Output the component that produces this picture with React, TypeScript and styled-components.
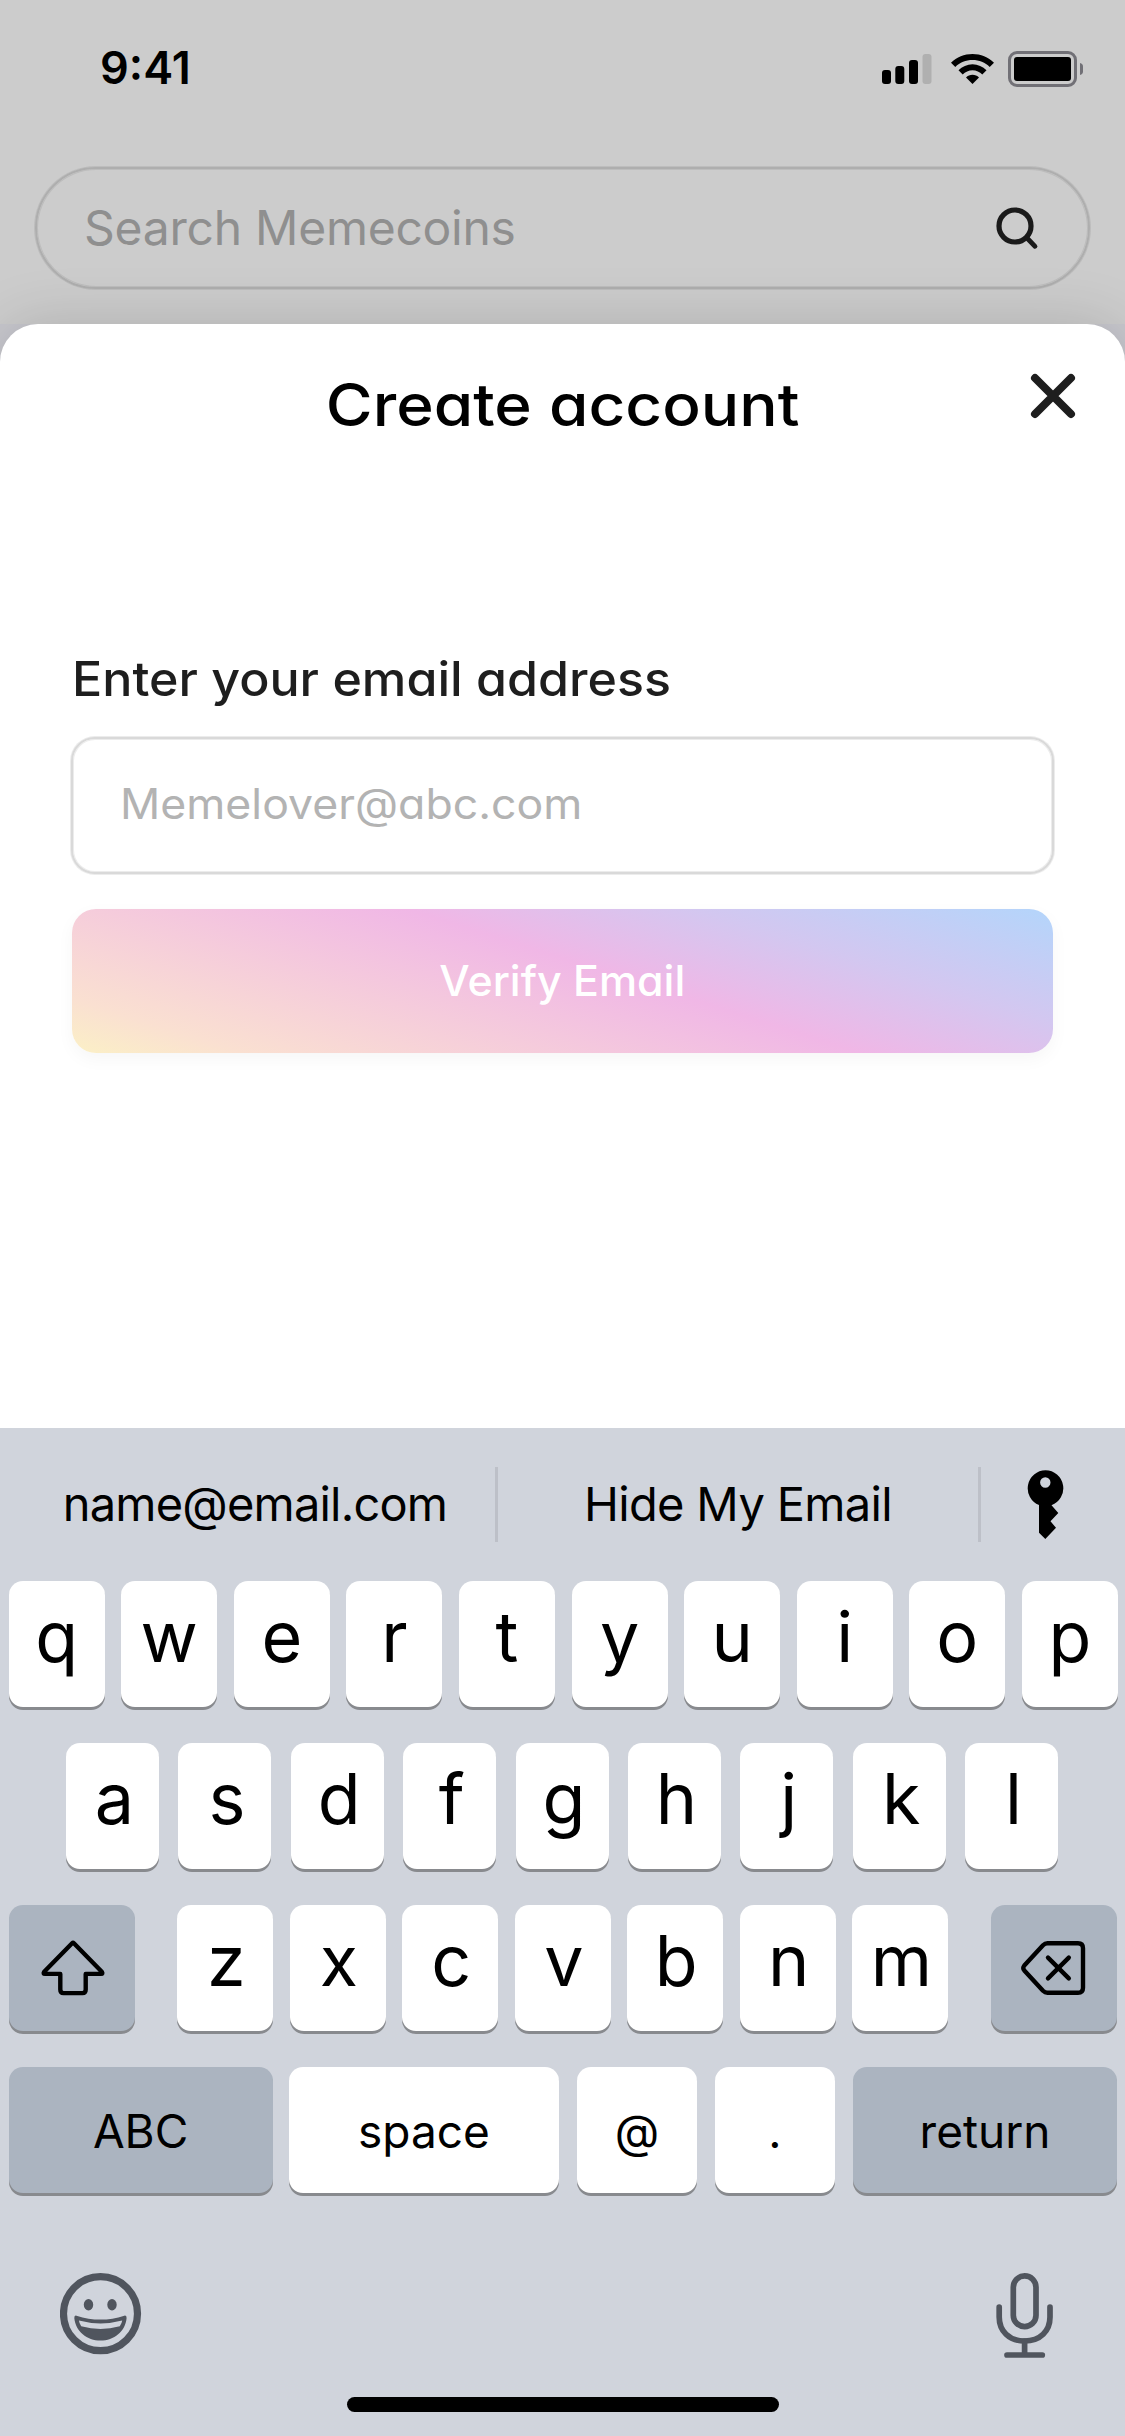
import React from "react";
import styled, { createGlobalStyle, css } from "styled-components";

const GlobalStyle = createGlobalStyle`
  *, *::before, *::after { box-sizing: border-box; }
  html, body { margin: 0; padding: 0; background: #d0d4dc; }
  body { font-family: Inter, "Liberation Sans", sans-serif; -webkit-font-smoothing: antialiased; }
  button { font-family: inherit; margin: 0; border: 0; }
  svg { display: block; }
`;

/* Wide lettering with a round, single-storey "a" */
const geometric = css<{ $stretch: number }>`
  display: inline-block;
  font-feature-settings: "cv11";
  transform: scaleX(${(p) => p.$stretch});
`;

const Screen = styled.main`
  display: flex;
  flex-direction: column;
  width: 1125px;
  height: 2436px;
  overflow: hidden;
  background: #d0d4dc;
`;

/* ---------- dimmed page behind the sheet ---------- */

const Backdrop = styled.header`
  flex: none;
  height: 324px;
  background: #cccccc;
`;

const StatusBar = styled.div`
  display: flex;
  align-items: center;
  justify-content: space-between;
  height: 134px;
  padding: 0 41px 0 100px;
`;

const Clock = styled.time`
  margin-top: 1px;
  font-size: 45px;
  line-height: 54px;
  font-weight: 600;
  color: #000;
`;

const StatusIcons = styled.svg`
  width: 202px;
  height: 36px;
  margin-top: 4px;
`;

const SearchField = styled.div`
  display: flex;
  align-items: center;
  justify-content: space-between;
  width: 1055px;
  height: 122px;
  margin: 33px 0 0 35px;
  padding: 0 49px 0 47px;
  border: 2px solid #aeaeae;
  border-radius: 61px;
  box-shadow: 0 0 0 1px rgba(174, 174, 174, 0.5), inset 0 0 0 1px rgba(174, 174, 174, 0.5);
`;

const SearchText = styled.span`
  font-size: 48px;
  line-height: 60px;
  letter-spacing: -0.25px;
  color: #8f8f8f;
`;

/* ---------- sheet ---------- */

const SheetArea = styled.section`
  flex: none;
  height: 1104px;
  background: #c7c7cd;
`;

const Sheet = styled.div`
  height: 100%;
  background: #fff;
  border-radius: 38px 38px 0 0;
  box-shadow: 0 0 60px rgba(0, 0, 0, 0.15);
`;

const SheetHeader = styled.div`
  display: grid;
  grid-template-columns: 1fr auto 1fr;
  align-items: center;
  height: 162px;
  padding: 0 44px;
`;

const SheetTitle = styled.h1<{ $stretch: number }>`
  ${geometric}
  grid-column: 2;
  margin: 0;
  font-size: 59px;
  line-height: 80px;
  font-weight: 500;
  color: #000;
`;

const CloseButton = styled.button`
  justify-self: end;
  padding: 0;
  margin: -18px 0 0;
  background: none;
`;

const Form = styled.form`
  display: flex;
  flex-direction: column;
  align-items: flex-start;
  margin: 163px 72px 0 71px;
`;

const Label = styled.label<{ $stretch: number }>`
  ${geometric}
  transform-origin: left;
  margin-left: 1px;
  font-size: 48px;
  line-height: 60px;
  font-weight: 500;
  color: #1e1e1e;
`;

const EmailField = styled.div`
  display: flex;
  align-items: center;
  width: 983px;
  height: 137px;
  margin-top: 28px;
  padding: 0 47px 3px;
  border: 2px solid #d9d9d9;
  border-radius: 24px;
  box-shadow: 0 0 0 1px rgba(217, 217, 217, 0.5), inset 0 0 0 1px rgba(217, 217, 217, 0.5);
  background: #fff;
`;

const Placeholder = styled.span<{ $stretch: number }>`
  ${geometric}
  transform-origin: left;
  font-size: 42px;
  line-height: 52px;
  color: #b3b3b3;
`;

const SubmitButton = styled.button`
  width: 981px;
  height: 144px;
  margin: 35px 0 0 1px;
  border-radius: 24px;
  background: linear-gradient(17.6deg, #fbf0c6 0%, #fae0d1 12%, #f0b7e6 55%, #d3c7f0 75%, #b6d4fa 98%);
  box-shadow: 0 6px 18px rgba(0, 0, 0, 0.04);
`;

const SubmitText = styled.span<{ $stretch: number }>`
  ${geometric}
  font-size: 42px;
  line-height: 52px;
  font-weight: 500;
  color: #fff;
`;

/* ---------- keyboard ---------- */

const Keyboard = styled.section`
  display: flex;
  flex-direction: column;
  flex: none;
  height: 1008px;
  background: #d0d4dc;
`;

const Suggestions = styled.div`
  display: grid;
  grid-template-columns: 480px 3px 480px 3px 129px;
  align-items: center;
  height: 153px;
  padding-left: 15px;
`;

const Suggestion = styled.button<{ $tracking?: number }>`
  height: 75px;
  padding: 0 0 2px;
  background: none;
  font-size: 47px;
  line-height: 60px;
  letter-spacing: ${(p) => p.$tracking ?? 0}px;
  color: #000;
  display: flex;
  align-items: center;
  justify-content: center;
`;

const IconSuggestion = styled(Suggestion)`
  padding: 0;
`;

const Divider = styled.i`
  height: 75px;
  background: #bdc0c8;
`;

const KeyRows = styled.div`
  display: flex;
  flex-direction: column;
  gap: 36px;
`;

const KeyRow = styled.div<{ $start: number; $end: number; $shift?: number }>`
  display: flex;
  justify-content: space-between;
  height: 126px;
  padding: 0 ${(p) => p.$end}px 0 ${(p) => p.$start}px;
  --nudge: ${(p) => p.$shift ?? 0}px;
`;

const BottomRow = styled(KeyRow)`
  justify-content: flex-start;
  gap: 18px;
`;

const KeyGroup = styled.div`
  display: flex;
  gap: 16.5px;
`;

const Key = styled.button<{ $w: number; $dark?: boolean; $label?: boolean }>`
  display: flex;
  align-items: center;
  justify-content: center;
  flex: none;
  width: ${(p) => p.$w}px;
  height: 126px;
  border-radius: 14px;
  background: ${(p) => (p.$dark ? "#abb4c0" : "#fff")};
  box-shadow: 0 3px 0 #888a8e;
  color: #000;
  ${(p) =>
    p.$label
      ? css`
          padding: 2px 0 0;
          font-size: 46px;
          line-height: 56px;
        `
      : css`
          padding: 0 0 15px var(--nudge);
          font-size: 70px;
          line-height: 84px;
        `}
`;

const ModeKey = styled(Key)`
  margin-right: -1.6px;
`;

const ShiftKey = styled(Key)`
  padding: 0 0 0 2px;
`;

const DeleteKey = styled(Key)`
  padding: 0 2px 0 0;
`;

const Dock = styled.div`
  display: flex;
  align-items: flex-start;
  justify-content: space-between;
  height: 204px;
  padding: 80px 72px 0 60px;
`;

const HomeIndicator = styled.div`
  width: 432px;
  height: 15px;
  margin: 0 auto;
  border-radius: 8px;
  background: #000;
`;

function StatusGlyphs() {
  return (
    <StatusIcons viewBox="0 0 202 36">
      <rect x="0" y="19" width="9" height="14" rx="3" />
      <rect x="13.3" y="15" width="9" height="18" rx="3" />
      <rect x="27" y="9" width="9" height="24" rx="3" />
      <rect x="40.5" y="3" width="9" height="30" rx="3" fill="#b0b0b0" />
      <path d="M90.5 3C82.3 3 74.7 6.3 69 11.7L73.3 15.9C77.8 11.6 83.8 9.1 90.5 9.1S103.2 11.6 107.7 15.9L112 11.7C106.3 6.3 98.7 3 90.5 3Z" />
      <path d="M90.5 13.2C85.1 13.2 80.2 15.5 76.5 19.3L80.7 23.5C83.3 20.9 86.7 19.3 90.5 19.3S97.7 20.9 100.3 23.5L104.5 19.3C100.8 15.5 95.9 13.2 90.5 13.2Z" />
      <path d="M90.5 23.8C88 23.8 85.7 24.8 84 26.5L90.5 33L97 26.5C95.3 24.8 93 23.8 90.5 23.8Z" />
      <rect x="127.5" y="1.5" width="66" height="33" rx="7.5" fill="none" stroke="#717076" strokeWidth="3" />
      <rect x="132" y="6" width="57" height="24" rx="3" />
      <path d="M198 12C200 12.3 201 13.8 201 15.5V20.5C201 22.2 200 23.7 198 24Z" fill="#717076" />
    </StatusIcons>
  );
}

function SearchIcon() {
  return (
    <svg width="44" height="44" viewBox="0 0 44 44" fill="none" stroke="#1a1a1a" strokeWidth="5.2" strokeLinecap="round">
      <circle cx="20" cy="20" r="16" />
      <path d="M32 32L40 40.3" strokeWidth="4.8" />
    </svg>
  );
}

function CloseIcon() {
  return (
    <svg width="56" height="56" viewBox="0 0 56 56" stroke="#1e1e1e" strokeWidth="8" strokeLinecap="round">
      <path d="M10 10L46 46M46 10L10 46" />
    </svg>
  );
}

function KeyIcon() {
  return (
    <svg width="37" height="70" viewBox="0 0 37 70">
      <path
        fillRule="evenodd"
        d="M18.5 0.3A18 18 0 0 1 24.5 35.2L31.3 43L23.5 51.3L29 57.8L18.3 69L12 62.8V35A18 18 0 0 1 18.5 0.3ZM18.3 7.3A5.2 5.2 0 1 0 18.3 17.7A5.2 5.2 0 1 0 18.3 7.3Z"
      />
    </svg>
  );
}

function ShiftIcon() {
  return (
    <svg width="66" height="58" viewBox="0 0 66 58" fill="none" stroke="#000" strokeWidth="4.4" strokeLinejoin="round">
      <path d="M33.9 4.3Q33 3.4 32.1 4.3L4.2 32.8Q2.8 34.9 5 34.9H20.3V50.5Q20.3 54.1 23.5 54.1H42.5Q45.7 54.1 45.7 50.5V34.9H61Q63.2 34.9 61.8 32.8Z" />
    </svg>
  );
}

function BackspaceIcon() {
  return (
    <svg width="66" height="58" viewBox="0 0 66 58" fill="none" stroke="#000" strokeWidth="4.4" strokeLinecap="round" strokeLinejoin="round">
      <path d="M27.5 4.2H58Q63 4.2 63 9.2V48.8Q63 53.8 58 53.8H27.5Q25 53.8 23 51.8L4.3 31.5Q2.3 29 4.3 26.5L23 6.2Q25 4.2 27.5 4.2Z" />
      <path d="M28 18.6L48.8 39.4M48.8 18.6L28 39.4" />
    </svg>
  );
}

function EmojiIcon() {
  return (
    <svg width="82" height="82" viewBox="0 0 82 82">
      <circle cx="40.5" cy="40.7" r="37" fill="none" stroke="#50555e" strokeWidth="7.2" />
      <g fill="#50555e">
        <ellipse cx="28.5" cy="31.7" rx="4.7" ry="5.7" />
        <ellipse cx="52" cy="31.7" rx="4.7" ry="5.7" />
        <path
          fillRule="evenodd"
          d="M16.5 42.7Q40.5 50.5 64.3 42.7Q66.6 42.2 66.6 45C65.5 58.5 54 67.6 40.5 67.6S15.5 58.5 14.3 45Q14.3 42.2 16.5 42.7ZM18.9 47.5Q19.3 50.5 21.2 53.3Q40.5 58.5 59.8 53.3Q61.8 50.5 62.2 47.5Q40.5 53.3 18.9 47.5Z"
        />
      </g>
    </svg>
  );
}

function MicIcon() {
  return (
    <svg width="58" height="86" viewBox="0 0 58 86" fill="none" stroke="#50555e" strokeWidth="5.7" strokeLinecap="round">
      <rect x="18.3" y="2.9" width="22.7" height="50.7" rx="11.35" />
      <path d="M4.2 34.2V44C4.2 58 14 68 29.6 68S55 58 55 44V34.2" />
      <path d="M29.6 68V82M12 82H47.3" />
    </svg>
  );
}

const letters = (row: string, width: number) =>
  row.split("").map((c) => (
    <Key key={c} type="button" $w={width}>
      {c}
    </Key>
  ));

export default function App() {
  return (
    <Screen>
      <GlobalStyle />
      <Backdrop>
        <StatusBar>
          <Clock>9:41</Clock>
          <StatusGlyphs />
        </StatusBar>
        <SearchField>
          <SearchText>Search Memecoins</SearchText>
          <SearchIcon />
        </SearchField>
      </Backdrop>

      <SheetArea>
        <Sheet>
          <SheetHeader>
            <SheetTitle $stretch={1.083}>Create account</SheetTitle>
            <CloseButton type="button" aria-label="Close">
              <CloseIcon />
            </CloseButton>
          </SheetHeader>
          <Form>
            <Label $stretch={1.045}>Enter your email address</Label>
            <EmailField>
              <Placeholder $stretch={1.062}>Memelover@abc.com</Placeholder>
            </EmailField>
            <SubmitButton type="button">
              <SubmitText $stretch={1.022}>Verify Email</SubmitText>
            </SubmitButton>
          </Form>
        </Sheet>
      </SheetArea>

      <Keyboard>
        <Suggestions>
          <Suggestion type="button" $tracking={-0.8}>name@email.com</Suggestion>
          <Divider />
          <Suggestion type="button" $tracking={-0.65}>Hide My Email</Suggestion>
          <Divider />
          <IconSuggestion type="button" aria-label="Passwords">
            <KeyIcon />
          </IconSuggestion>
        </Suggestions>

        <KeyRows>
          <KeyRow $start={8.6} $end={7}>{letters("qwertyuiop", 96)}</KeyRow>
          <KeyRow $start={66} $end={67} $shift={4}>{letters("asdfghjkl", 93)}</KeyRow>
          <KeyRow $start={8.6} $end={8} $shift={2}>
            <ShiftKey type="button" $w={126} $dark aria-label="Shift">
              <ShiftIcon />
            </ShiftKey>
            <KeyGroup>{letters("zxcvbnm", 96)}</KeyGroup>
            <DeleteKey type="button" $w={126} $dark aria-label="Delete">
              <BackspaceIcon />
            </DeleteKey>
          </KeyRow>
          <BottomRow $start={8.6} $end={8}>
            <ModeKey type="button" $w={264} $dark $label>ABC</ModeKey>
            <Key type="button" $w={270} $label>space</Key>
            <Key type="button" $w={120} $label>@</Key>
            <Key type="button" $w={120} $label>.</Key>
            <Key type="button" $w={264} $dark $label>return</Key>
          </BottomRow>
        </KeyRows>

        <Dock>
          <EmojiIcon />
          <MicIcon />
        </Dock>
        <HomeIndicator />
      </Keyboard>
    </Screen>
  );
}
